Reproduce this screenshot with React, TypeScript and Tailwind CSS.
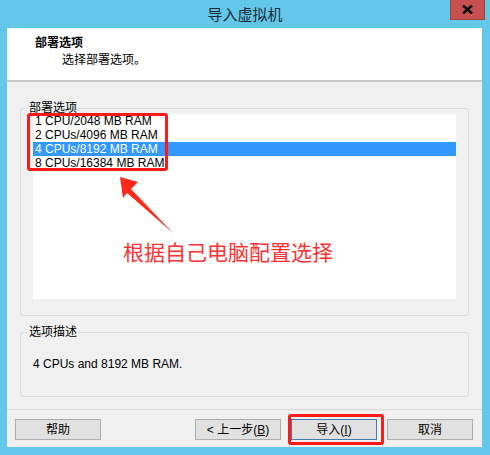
import type { ReactNode } from "react";

const ui = "font-['Liberation_Sans','Noto_Sans_CJK_SC',sans-serif]";

const options = [
  "1 CPU/2048 MB RAM",
  "2 CPUs/4096 MB RAM",
  "4 CPUs/8192 MB RAM",
  "8 CPUs/16384 MB RAM",
];

function Btn({ children, primary }: { children: ReactNode; primary?: boolean }) {
  return (
    <div
      className={`w-[86px] h-[21px] flex items-center justify-center text-[12px] text-black bg-[#e1e1e1] border ${
        primary ? "border-[#3c7fb1]" : "border-[#adadad]"
      }`}
    >
      {children}
    </div>
  );
}

export default function App() {
  return (
    <div className={`relative w-[490px] h-[455px] bg-[#63c7ea] flex flex-col ${ui}`}>
      {/* title bar */}
      <div className="relative h-[28px] flex items-center justify-center">
        <span className="text-[15px] text-[#1b2a35] font-['Noto_Sans_CJK_SC',sans-serif]">导入虚拟机</span>
        <div className="absolute right-[5px] top-0 w-[35px] h-[20px] bg-[#c75050] border border-[#a94040] border-t-0 flex items-center justify-center">
          <svg width="11" height="9" viewBox="0 0 11 9">
            <path d="M1 0.5 L10 8.5 M10 0.5 L1 8.5" stroke="#000" strokeWidth="2.4" />
          </svg>
        </div>
      </div>

      {/* client area */}
      <div className="flex-1 ml-[7px] mr-[8px] mb-[8px] bg-[#f0f0f0] flex flex-col">
        <div className="h-[54px] bg-white border-b-2 border-[#c9c9c9] pl-[28px] pt-[8px]">
          <div className="text-[12px] leading-[14px] font-bold text-black">部署选项</div>
          <div className="text-[12px] leading-[14px] mt-[3px] pl-[27px] text-black">选择部署选项。</div>
        </div>

        <div className="px-[13px]">
          <div className="relative mt-[26px] h-[208px] border border-[#d5dde4] rounded-[3px] px-[12px] pt-[5px]">
            <span className="absolute -top-[8px] left-[6px] px-[2px] bg-[#f0f0f0] text-[12px] leading-[14px] text-black">部署选项</span>
            <div className="h-[185px] bg-white">
              {options.map((o, i) => (
                <div
                  key={o}
                  className={`h-[14px] leading-[14px] pl-[2px] text-[12px] ${
                    i === 2 ? "bg-[#3399ff] text-white" : "text-black"
                  }`}
                >
                  {o}
                </div>
              ))}
            </div>
          </div>

          <div className="relative mt-[16px] h-[65px] border border-[#d5dde4] rounded-[3px] pl-[12px] pt-[24px]">
            <span className="absolute -top-[8px] left-[6px] px-[2px] bg-[#f0f0f0] text-[12px] leading-[14px] text-black">选项描述</span>
            <div className="text-[12px] leading-[14px] text-black">4 CPUs and 8192 MB RAM.</div>
          </div>
        </div>

        <div className="mt-[12px] border-t border-[#d7d7d7]" />

        <div className="flex items-center pt-[9px] pl-[8px] pr-[9px]">
          <Btn>帮助</Btn>
          <div className="flex-1" />
          <div className="flex gap-[10px]">
            <Btn>
              &lt; 上一步(<span className="underline">B</span>)
            </Btn>
            <Btn primary>
              导入(<span className="underline">I</span>)
            </Btn>
            <Btn>取消</Btn>
          </div>
        </div>
      </div>

      {/* annotations */}
      <div className="absolute left-[27px] top-[113px] w-[141px] h-[58px] border-[3px] border-[#ff1a1a] rounded-[3px]" />
      <div className="absolute left-[288px] top-[414px] w-[96px] h-[31px] border-[3px] border-[#ff1a1a] rounded-[3px]" />
      <svg className="absolute left-0 top-0" width="490" height="455" viewBox="0 0 490 455">
        <polygon points="120,177 138,182 131,189 173,233 127,193 123,198" fill="#ff2a1a" />
      </svg>
      <div className="absolute left-[123px] top-[238px] text-[21px] leading-[26px] text-[#ff3030] font-['Noto_Sans_CJK_SC',sans-serif]">
        根据自己电脑配置选择
      </div>
    </div>
  );
}
